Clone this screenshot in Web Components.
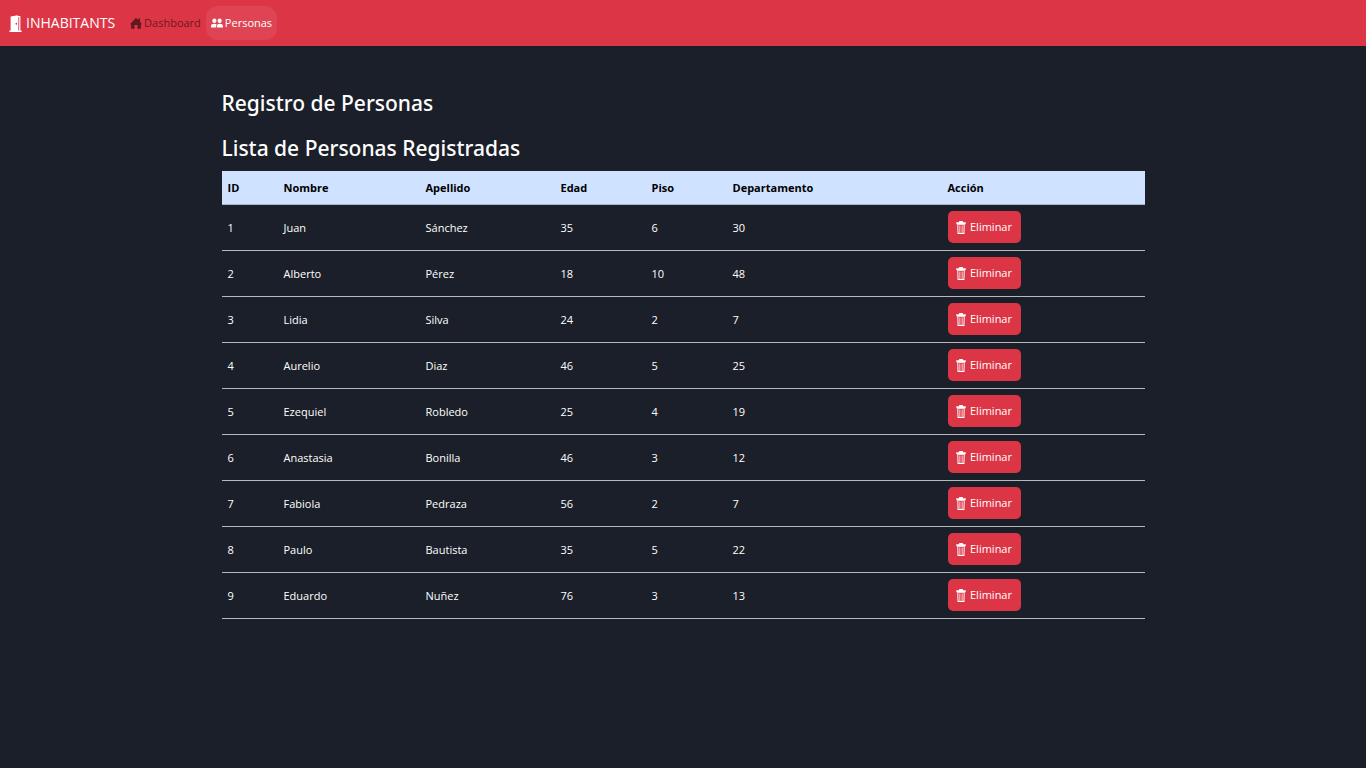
<!DOCTYPE html>
<html lang="es">
<head>
<meta charset="utf-8">
<title>Inhabitants</title>
<meta name="viewport" content="width=device-width, initial-scale=1">
<style>
html, body { margin: 0; min-height: 100%; background: #1b1f29; }
body { font-family: "Open Sans", "Noto Sans", sans-serif; font-size: 11px; line-height: 20px; color: #fff; }
</style>
</head>
<body>
<inh-app></inh-app>
<script>
const ICONS = {
  door: '<path fill-rule="evenodd" d="M.5 14.5H2V1.500L11 .2v.8h3v13.500h1.500V16H.5zM11.500 2v12.500h1V2zM9 7.200a1 1 0 1 0 0 2 1 1 0 0 0 0-2"/>',
  house: '<path d="M8 1 11 4V2h2.500v4.500L16 9.500l-1.500.5v5.500h-4.500v-5h-4v5H1.500V10L0 9.500z"/>',
  people: '<path d="M4.500 2a2.800 3 0 1 1 0 6 2.800 3 0 0 1 0-6m7 0a2.800 3 0 1 1 0 6 2.800 3 0 0 1 0-6M0 14v-2c0-2 2-3 4.500-3 1.500 0 2.500.3 3.200 1C7 11 6.800 12 6.800 14zm7.800 0c0-3 .7-5 3.700-5 2.500 0 4.500 1 4.500 3v2z"/>',
  trash: '<path d="M5 0h6v1.500h4.500v2.500H.5V1.500H5z"/><path fill-rule="evenodd" d="M2 4h12l-.5 12h-11zm1.600 1 .4 9.600h8L12.400 5z"/><path fill-opacity=".7" d="M5 5.500h1.200v8.500H5zm2.400 0h1.200v8.500H7.400zm2.400 0H11v8.500H9.800z"/>'
};

class InhIcon extends HTMLElement {
  connectedCallback() {
    this.attachShadow({ mode: 'open' }).innerHTML = `
      <style>
        :host { display: block; flex: none; width: 12px; height: 12px; }
        svg { display: block; width: 100%; height: 100%; fill: currentColor; }
      </style>
      <svg viewBox="0 0 16 16" preserveAspectRatio="none" aria-hidden="true">${ICONS[this.getAttribute('name')]}</svg>`;
  }
}

class InhNavLink extends HTMLElement {
  connectedCallback() {
    this.attachShadow({ mode: 'open' }).innerHTML = `
      <style>
        :host { display: block; }
        a { display: flex; align-items: center; gap: 2px; box-sizing: border-box; height: 34px; padding: 0 5px;
            border-radius: 12px; color: rgba(0, 0, 0, .55); text-decoration: none; }
        :host([active]) a { color: #fff; background: rgba(255, 255, 255, .08); }
      </style>
      <a href="${this.getAttribute('to')}"><inh-icon name="${this.getAttribute('icon')}"></inh-icon><slot></slot></a>`;
  }
}

class InhNavbar extends HTMLElement {
  connectedCallback() {
    this.attachShadow({ mode: 'open' }).innerHTML = `
      <style>
        :host { display: block; background: #dc3545; }
        nav { display: flex; align-items: center; box-sizing: border-box; height: 46px; padding: 0 9px; gap: 10px; }
        .brand { display: flex; align-items: center; gap: 4px; color: #fff; text-decoration: none; font-size: 14px; }
        .brand inh-icon { width: 13px; height: 17px; }
        .links { display: flex; }
      </style>
      <nav>
        <a class="brand" href="#inicio"><inh-icon name="door"></inh-icon>INHABITANTS</a>
        <div class="links">
          <inh-nav-link to="#dashboard" icon="house">Dashboard</inh-nav-link>
          <inh-nav-link to="#personas" icon="people" active>Personas</inh-nav-link>
        </div>
      </nav>`;
  }
}

class InhDeleteButton extends HTMLElement {
  connectedCallback() {
    this.attachShadow({ mode: 'open' }).innerHTML = `
      <style>
        :host { display: block; }
        button { display: flex; align-items: center; justify-content: center; gap: 4px; box-sizing: border-box;
                 width: 73px; height: 32px; padding: 0; border: 0; border-radius: 5px;
                 background: #dc3545; color: #fff; font: inherit; cursor: pointer; }
        inh-icon { width: 10px; height: 13px; }
      </style>
      <button type="button"><inh-icon name="trash"></inh-icon><slot></slot></button>`;
  }
}

class InhTable extends HTMLElement {
  connectedCallback() {
    const people = [
      ['Juan', 'Sánchez', 35, 6, 30],
      ['Alberto', 'Pérez', 18, 10, 48],
      ['Lidia', 'Silva', 24, 2, 7],
      ['Aurelio', 'Diaz', 46, 5, 25],
      ['Ezequiel', 'Robledo', 25, 4, 19],
      ['Anastasia', 'Bonilla', 46, 3, 12],
      ['Fabiola', 'Pedraza', 56, 2, 7],
      ['Paulo', 'Bautista', 35, 5, 22],
      ['Eduardo', 'Nuñez', 76, 3, 13]
    ];
    const widths = [56, 142, 135, 91, 81, 215, 203];
    const heads = ['ID', 'Nombre', 'Apellido', 'Edad', 'Piso', 'Departamento', 'Acción'];
    const total = widths.reduce((a, b) => a + b);
    this.attachShadow({ mode: 'open' }).innerHTML = `
      <style>
        :host { display: block; }
        table { width: 100%; table-layout: fixed; border-collapse: separate; border-spacing: 0; }
        th, td { padding: 7px 6px 6px; text-align: left; vertical-align: middle; border-bottom: 1px solid #b6b9be; }
        th { background: #cfe2ff; color: #000; font-weight: 700; border-color: #a6b5cc; }
        td:last-child { padding: 6px 6px 7px; }
      </style>
      <table>
        <colgroup>${widths.map(w => `<col style="width:${w / total * 100}%">`).join('')}</colgroup>
        <thead><tr>${heads.map(h => `<th scope="col">${h}</th>`).join('')}</tr></thead>
        <tbody>${people.map((p, i) => `<tr><td>${i + 1}</td>${p.map(c => `<td>${c}</td>`).join('')}<td><inh-delete-button>Eliminar</inh-delete-button></td></tr>`).join('')}</tbody>
      </table>`;
  }
}

class InhApp extends HTMLElement {
  connectedCallback() {
    this.attachShadow({ mode: 'open' }).innerHTML = `
      <style>
        :host { display: block; }
        main { width: 68%; max-width: 923px; margin: 0 auto; padding: 39px 0; }
        h1, h2 { margin: 0; font-family: "Noto Sans", sans-serif; font-size: 21px; line-height: 36px; font-weight: 500; }
        h1 { margin-bottom: 9px; }
        h2 { margin-bottom: 5px; }
      </style>
      <inh-navbar></inh-navbar>
      <main>
        <h1>Registro de Personas</h1>
        <h2>Lista de Personas Registradas</h2>
        <inh-table></inh-table>
      </main>`;
  }
}

customElements.define('inh-icon', InhIcon);
customElements.define('inh-nav-link', InhNavLink);
customElements.define('inh-navbar', InhNavbar);
customElements.define('inh-delete-button', InhDeleteButton);
customElements.define('inh-table', InhTable);
customElements.define('inh-app', InhApp);
</script>
</body>
</html>
